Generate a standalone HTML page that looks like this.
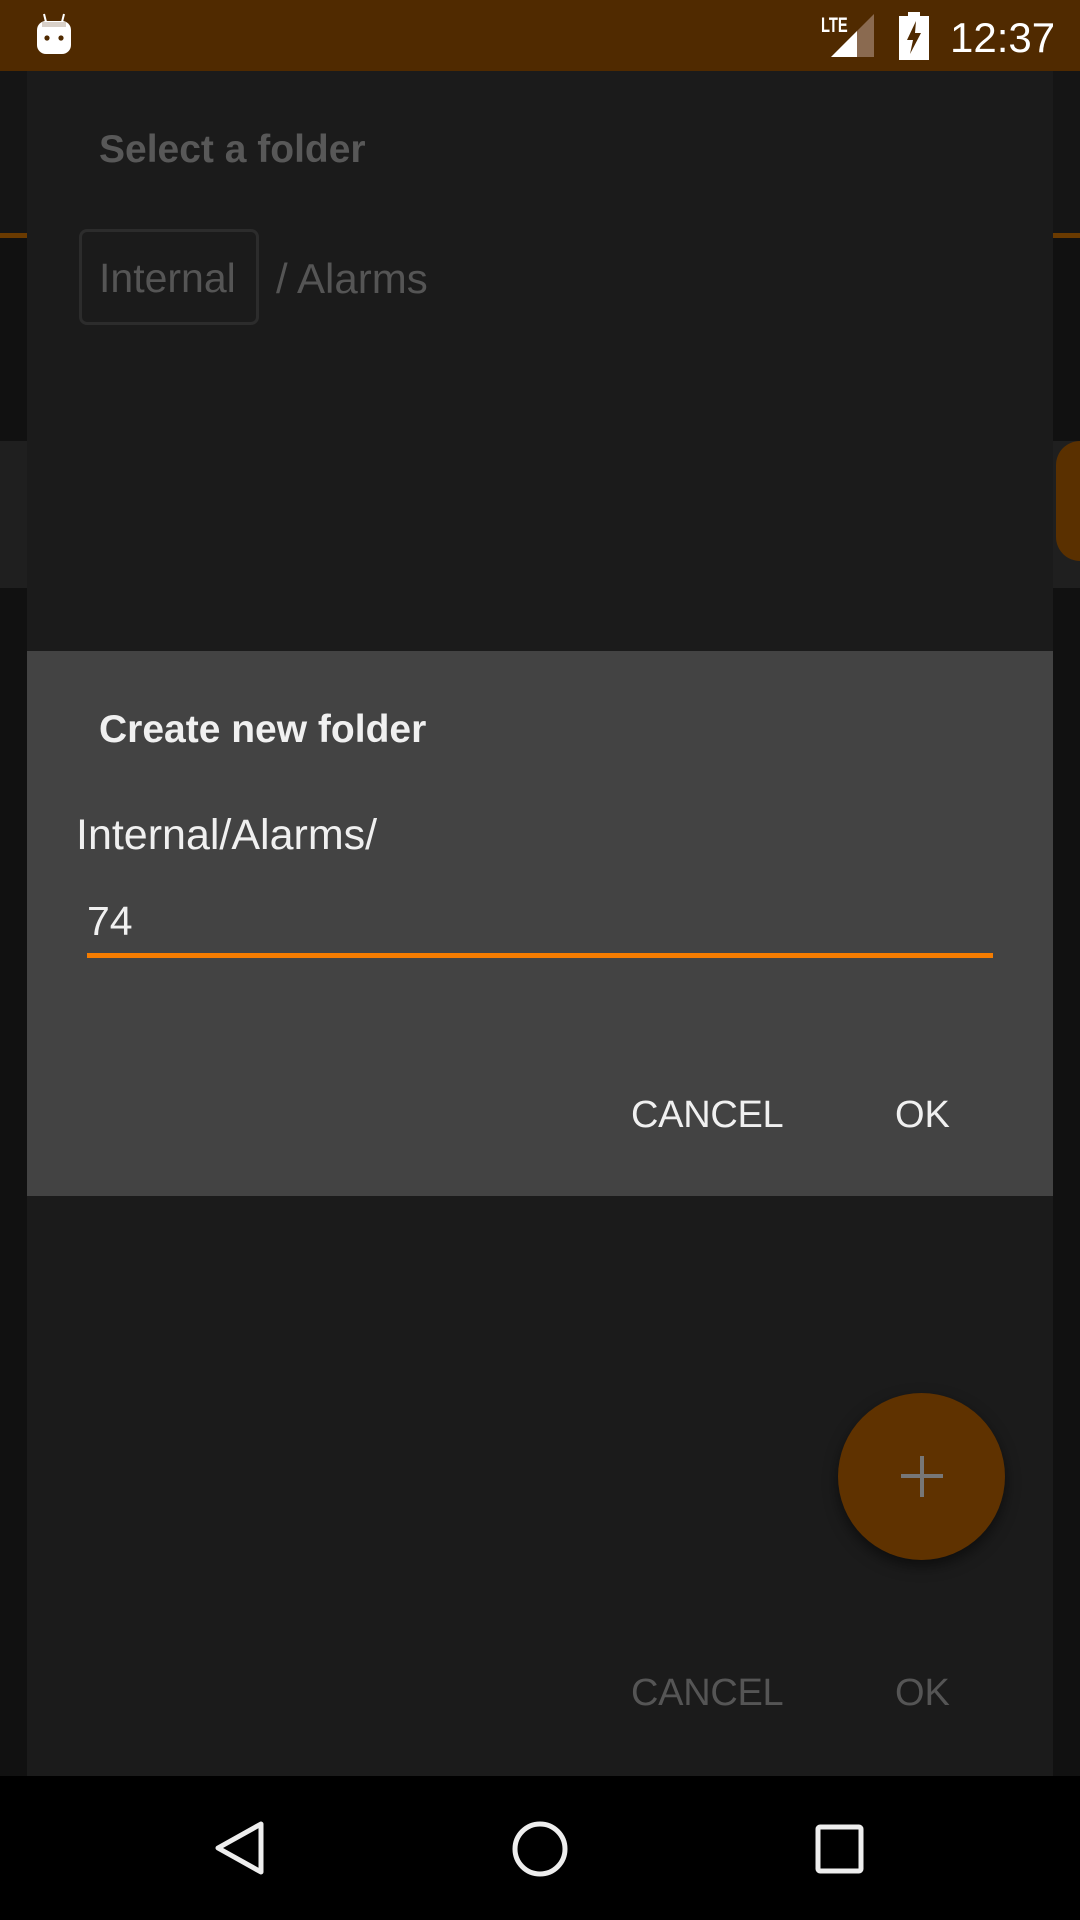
<!DOCTYPE html>
<html><head><meta charset="utf-8"><style>
*{margin:0;padding:0;box-sizing:border-box}
body{width:1080px;height:1920px;background:#111;position:relative;overflow:hidden;font-family:"Liberation Sans",sans-serif}
.a{position:absolute}
.t{position:absolute;white-space:nowrap;line-height:1}
</style></head><body>
<div class="a" style="left:0;top:71px;width:1080px;height:164px;background:#151515"></div>
<div class="a" style="left:0;top:233px;width:1080px;height:5px;background:#6a3a00"></div>
<div class="a" style="left:0;top:441px;width:1080px;height:147px;background:#1f1f1f"></div>
<div class="a" style="left:1056px;top:441px;width:30px;height:120px;background:#5a3000;border-radius:24px 0 0 24px"></div>
<div class="a" style="left:0;top:0;width:1080px;height:71px;background:#502a00"></div>
<svg class="a" style="left:34px;top:12px" width="40" height="44" viewBox="0 0 40 44"><path d="M10 2 L12 10 M30 2 L28 10" stroke="#fff" stroke-width="2"/><rect x="3" y="9" width="34" height="33" rx="9" fill="#fff"/><rect x="8" y="10" width="24" height="5" fill="#d8d0c8"/><circle cx="13" cy="26" r="2.6" fill="#502a00"/><circle cx="27" cy="26" r="2.6" fill="#502a00"/></svg>
<div class="t" style="left:821px;top:15px;font-size:21px;font-weight:bold;color:#fff;transform:scaleX(.7);transform-origin:left">LTE</div>
<svg class="a" style="left:831px;top:14px" width="44" height="44" viewBox="0 0 44 44"><polygon points="43,0 43,43 0,43" fill="#8a6a50"/><polygon points="26,17 26,43 0,43" fill="#fff"/></svg>
<svg class="a" style="left:899px;top:12px" width="30" height="48" viewBox="0 0 30 48"><rect x="9" y="0" width="12" height="5" fill="#fff"/><rect x="0" y="4" width="30" height="44" fill="#fff"/><polygon points="17,9 8,28 14,28 11,42 22,21 16,21" fill="#502a00"/></svg>
<div class="t" style="left:950px;top:17px;font-size:42px;color:#fff">12:37</div>

<div class="a" style="left:27px;top:71px;width:1026px;height:1705px;background:#1b1b1b"></div>
<div class="t" style="left:99px;top:130px;font-size:39px;font-weight:bold;color:#585858">Select a folder</div>
<div class="a" style="left:79px;top:229px;width:180px;height:96px;border:3px solid #2c2c2c;border-radius:8px"></div>
<div class="t" style="left:99px;top:258px;font-size:41px;color:#555">Internal</div>
<div class="t" style="left:276px;top:258px;font-size:42px;color:#555">/ Alarms</div>

<div class="a" style="left:27px;top:651px;width:1026px;height:545px;background:#434343"></div>
<div class="t" style="left:99px;top:710px;font-size:39px;font-weight:bold;color:#f0f0f0">Create new folder</div>
<div class="t" style="left:76px;top:814px;font-size:43px;color:#f0f0f0">Internal/Alarms/</div>
<div class="t" style="left:87px;top:901px;font-size:41px;color:#f0f0f0">74</div>
<div class="a" style="left:87px;top:953px;width:906px;height:5px;background:#f57c00"></div>
<div class="t" style="left:631px;top:1096px;font-size:38px;color:#f0f0f0;letter-spacing:-.3px">CANCEL</div>
<div class="t" style="left:895px;top:1096px;font-size:38px;color:#f0f0f0">OK</div>

<div class="a" style="left:838px;top:1393px;width:167px;height:167px;border-radius:50%;background:#5f3200;box-shadow:0 6px 14px rgba(0,0,0,.5)"></div>
<div class="a" style="left:901px;top:1474px;width:42px;height:4px;background:#777"></div>
<div class="a" style="left:920px;top:1456px;width:4px;height:41px;background:#777"></div>
<div class="t" style="left:631px;top:1674px;font-size:38px;color:#555;letter-spacing:-.3px">CANCEL</div>
<div class="t" style="left:895px;top:1674px;font-size:38px;color:#555">OK</div>

<div class="a" style="left:0;top:1776px;width:1080px;height:144px;background:#000"></div>
<svg class="a" style="left:0;top:1776px" width="1080" height="144"><polygon points="261,48 261,96 218,72" fill="none" stroke="#eee" stroke-width="5" stroke-linejoin="round"/><circle cx="540" cy="73" r="25" fill="none" stroke="#eee" stroke-width="5"/><rect x="818" y="51" width="43" height="44" rx="2" fill="none" stroke="#eee" stroke-width="5"/></svg>
</body></html>
